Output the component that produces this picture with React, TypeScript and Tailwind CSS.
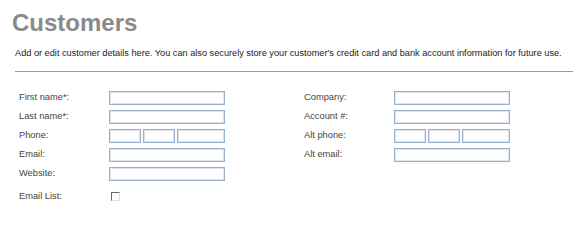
const LEFT = [
  { label: 'First name*:', kind: 'text' },
  { label: 'Last name*:', kind: 'text' },
  { label: 'Phone:', kind: 'phone' },
  { label: 'Email:', kind: 'text' },
  { label: 'Website:', kind: 'text' },
];

const RIGHT = [
  { label: 'Company:', kind: 'text' },
  { label: 'Account #:', kind: 'text' },
  { label: 'Alt phone:', kind: 'phone' },
  { label: 'Alt email:', kind: 'text' },
];

const boxCls =
  'h-[14px] border border-[#98afc9] shadow-[inset_0_0_0_1px_#dde6f0] bg-white outline-none px-1 text-[10px]';

function Field({ label, kind }: { label: string; kind: string }) {
  return (
    <div className="flex items-center h-[19px]">
      <label className="w-[90px] text-[9.3px] leading-[13px] text-[#444]">{label}</label>
      {kind === 'phone' ? (
        <div className="flex w-[116px] gap-[2px]">
          <input className={`${boxCls} w-[32px]`} />
          <input className={`${boxCls} w-[32px]`} />
          <input className={`${boxCls} flex-1 min-w-0`} />
        </div>
      ) : (
        <input className={`${boxCls} w-[116px]`} />
      )}
    </div>
  );
}

export default function App() {
  return (
    <div className="w-[588px] h-[208px] overflow-hidden bg-white font-['Liberation_Sans',Arial,sans-serif]">
      <h1 className="pl-[12px] pt-[11px] text-[24px] leading-6 font-bold text-[#8a8a8a]">Customers</h1>
      <p className="mt-[12px] pl-[15px] whitespace-nowrap text-[9.2px] leading-[13px] text-[#222]">
        Add or edit customer details here. You can also securely store your customer's credit card and bank
        account information for future use.
      </p>
      <hr className="mt-[11px] ml-[15px] w-[558px] border-0 border-t border-[#9a9a9a]" />

      <div className="flex pl-[19px] pt-[16px] gap-[79px]">
        <div className="flex flex-col">
          {LEFT.map((f) => (
            <Field key={f.label} {...f} />
          ))}
          <div className="flex items-center h-[19px] mt-[4px]">
            <label className="w-[90px] text-[9.3px] leading-[13px] text-[#444]">Email List:</label>
            <span className="ml-[2px] w-[9px] h-[9px] border-t border-l border-t-[#666] border-l-[#666] border-b border-r border-b-[#ddd] border-r-[#ddd] bg-white" />
          </div>
        </div>
        <div className="flex flex-col">
          {RIGHT.map((f) => (
            <Field key={f.label} {...f} />
          ))}
        </div>
      </div>
    </div>
  );
}
